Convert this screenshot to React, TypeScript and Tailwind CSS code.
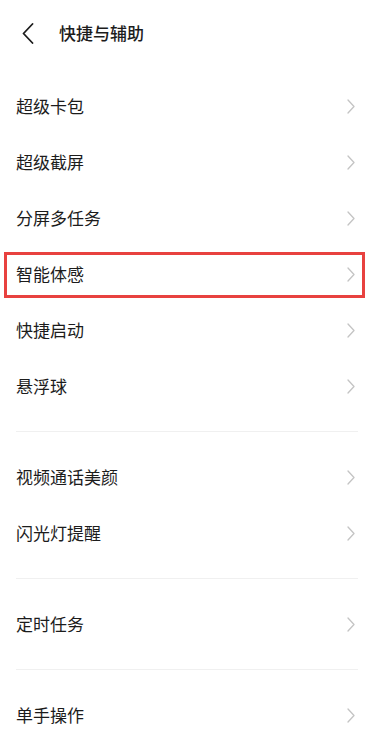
import {FC} from 'react';

type Row = {label: string; highlight?: boolean};

const groups: Row[][] = [
  [
    {label: '超级卡包'},
    {label: '超级截屏'},
    {label: '分屏多任务'},
    {label: '智能体感', highlight: true},
    {label: '快捷启动'},
    {label: '悬浮球'},
  ],
  [{label: '视频通话美颜'}, {label: '闪光灯提醒'}],
  [{label: '定时任务'}],
  [{label: '单手操作'}],
];

const Chevron: FC = () => (
  <svg width="8" height="15" viewBox="0 0 8 15" fill="none">
    <path d="M1 1 L7 7.5 L1 14" stroke="#c4c4c4" strokeWidth="1.3" strokeLinecap="round" strokeLinejoin="round" />
  </svg>
);

const ListRow: FC<Row> = ({label, highlight}) => (
  <div className="relative flex h-[56px] items-center justify-between pl-4 pr-[17px]">
    <span className="text-[17px] text-[#1c1c1c]">{label}</span>
    <Chevron />
    {highlight && (
      <span className="pointer-events-none absolute left-[4px] right-[7px] top-[6px] bottom-[4px] border-[3px] border-[#e8413f]" />
    )}
  </div>
);

export default function App() {
  return (
    <div
      className="h-[739px] w-[372px] overflow-hidden bg-white"
      style={{fontFamily: '"Noto Sans CJK SC", "Noto Sans", sans-serif'}}
    >
      <header className="flex h-[66px] items-center pl-[22px]">
        <svg width="12" height="21" viewBox="0 0 12 21" fill="none">
          <path d="M10.5 1 L1.5 10.5 L10.5 20" stroke="#1c1c1c" strokeWidth="1.8" strokeLinecap="round" strokeLinejoin="round" />
        </svg>
        <h1 className="ml-[25px] text-[17px] font-medium text-[#1c1c1c]">快捷与辅助</h1>
      </header>
      <div className="h-[12px]" />

      {groups.map((rows, gi) => (
        <div key={gi}>
          {gi > 0 && (
            <div className="flex h-[35px] items-center">
              <div className="ml-4 mr-[14px] h-px flex-1 bg-[#f0f0f0]" />
            </div>
          )}
          {rows.map((r) => (
            <ListRow key={r.label} {...r} />
          ))}
        </div>
      ))}
    </div>
  );
}
